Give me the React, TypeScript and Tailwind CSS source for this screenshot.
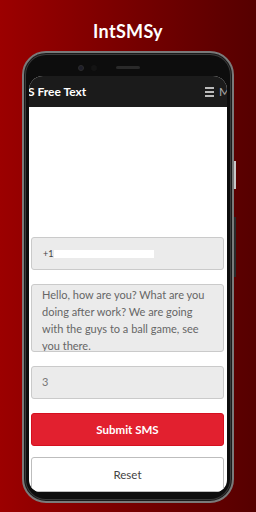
import React from "react";

export default function App() {
  const font = { fontFamily: 'Lato, "Open Sans", "Liberation Sans", sans-serif' };
  return (
    <div
      className="relative w-[256px] h-[512px] overflow-hidden bg-gradient-to-r from-[#9c0000] to-[#560000]"
      style={font}
    >
      <div className="pt-[20px] h-[51px] text-center text-white font-bold text-[18px] leading-[22px] tracking-[0.3px]">
        IntSMSy
      </div>
      <div className="relative ml-[22px] w-[212px] h-[452px] rounded-[24px] border-2 border-[#7a7a7a] bg-[#0d0d0d] shadow-[inset_0_0_0_1px_#1a1a1a,inset_0_0_0_2px_#3a3a3a] px-[5px] pt-[23px] pb-[9px] flex flex-col">
        {/* camera + speaker */}
        <div className="absolute top-[12px] left-[54px] w-[6px] h-[6px] rounded-full bg-[#1e1e2a] border border-[#2c2c2c]" />
        <div className="absolute top-[12px] left-[67px] w-[6px] h-[6px] rounded-full bg-[#141414]" />
        <div className="absolute top-[13px] left-[92px] w-[24px] h-[3px] rounded-full bg-[#2a2a2a]" />
        {/* side buttons */}
        <div className="absolute top-[108px] right-[-4px] w-[2px] h-[28px] bg-[#c8c8c8]" />
        <div className="absolute top-[164px] right-[-4px] w-[2px] h-[60px] bg-[#2a2a2a]" />
        <div className="flex-1 rounded-t-[14px] rounded-b-[12px] overflow-hidden flex flex-col bg-white">
          <div className="h-[31px] bg-[#1b1b1b] flex items-center justify-between overflow-hidden">
            <div className="ml-[-1px] text-white font-bold text-[12px] whitespace-nowrap">S Free Text</div>
            <div className="flex items-center gap-[5px]">
              <div className="flex flex-col gap-[2px]">
                <div className="w-[9px] h-[2px] bg-[#bbbbbb]" />
                <div className="w-[9px] h-[2px] bg-[#bbbbbb]" />
                <div className="w-[9px] h-[2px] bg-[#bbbbbb]" />
              </div>
              <div className="w-[8px] overflow-hidden text-[#aaaaaa] text-[12px] leading-none">M</div>
            </div>
          </div>
          <div className="flex-1 flex flex-col pl-[2px] pr-[3px] pt-[130px] overflow-hidden">
            <div className="h-[33px] shrink-0 bg-[#ebebeb] border border-[#cacaca] rounded-[3px] flex items-center pl-[11px]">
              <span className="text-[9px] text-[#444444]">+1</span>
              <div className="ml-[1px] w-[100px] h-[8px] bg-white" />
            </div>
            <div className="mt-[14px] h-[68px] shrink-0 bg-[#ebebeb] border border-[#cacaca] rounded-[3px] pl-[10px] pr-[14px] pt-[1px] overflow-hidden text-[11px] leading-[17px] text-[#666666]">
              Hello, how are you? What are you doing after work? We are going with the guys to a ball game, see you there.
            </div>
            <div className="mt-[14px] h-[33px] shrink-0 bg-[#ebebeb] border border-[#cacaca] rounded-[3px] flex items-center pl-[10px] text-[11px] text-[#777777]">
              3
            </div>
            <div className="mt-[14px] h-[33px] shrink-0 bg-[#e2202f] border border-[#d4101f] rounded-[3px] flex items-center justify-center text-white font-bold text-[11.5px]">
              Submit SMS
            </div>
            <div className="mt-[11px] h-[35px] shrink-0 bg-white border border-[#bdbdbd] rounded-[3px] flex items-center justify-center text-[#444444] text-[11.5px]">
              Reset
            </div>
          </div>
        </div>
      </div>
    </div>
  );
}
